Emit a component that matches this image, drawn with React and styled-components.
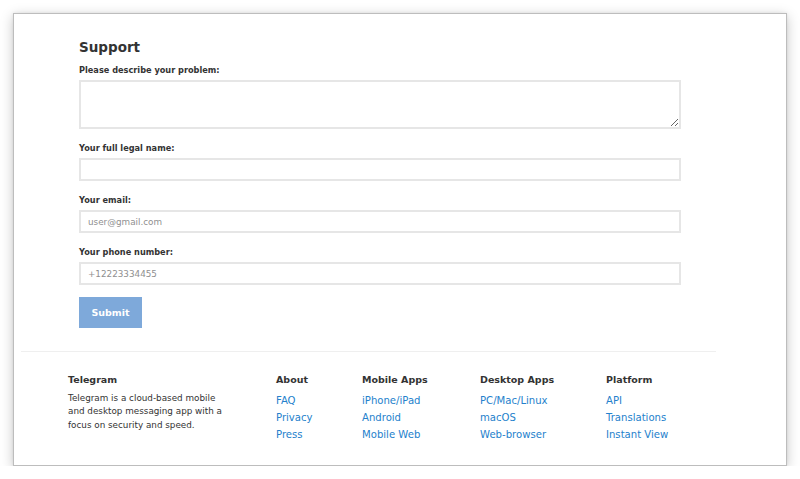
import React from "react";
import styled, { createGlobalStyle } from "styled-components";

const Global = createGlobalStyle`
  html, body { margin: 0; padding: 0; background: #ffffff; }
  body { font-family: "DejaVu Sans", "Lucida Grande", Verdana, sans-serif; color: #333; }
  * { box-sizing: border-box; }
`;

const Window = styled.div`
  margin: 13px 0 0 13px;
  width: 774px;
  height: 453px;
  background: #fff;
  border: 1px solid #bdbdbd;
  box-shadow: 0 3px 12px rgba(0, 0, 0, 0.22), 0 0 3px rgba(0, 0, 0, 0.08);
  overflow: hidden;
`;

const Container = styled.div`
  margin-left: 7px;
  width: 695px;
`;

const FormSection = styled.form`
  padding: 25px 0 0 58px;
  width: 660px;
  display: flex;
  flex-direction: column;
  align-items: flex-start;
`;

const Title = styled.h3`
  margin: 0 0 10px;
  font-size: 13.5px;
  line-height: 16px;
  font-weight: bold;
  color: #333;
`;

const Group = styled.div`
  width: 602px;
  margin-bottom: 14px;
  display: flex;
  flex-direction: column;
  &:last-of-type { margin-bottom: 12px; }
`;

const Label = styled.label`
  display: block;
  font-size: 8.2px;
  line-height: 10px;
  font-weight: bold;
  color: #333;
  margin-bottom: 5px;
`;

const fieldBase = `
  width: 602px;
  border: 2px solid #e6e6e6;
  background: #fff;
  font-family: "DejaVu Sans", Verdana, sans-serif;
  font-size: 8.8px;
  color: #333;
  padding: 0 7px;
  outline: none;
  border-radius: 0;
  &::placeholder { color: #8f8f8f; opacity: 1; }
`;

const TextArea = styled.textarea`
  ${fieldBase}
  height: 49px;
  display: block;
  padding-top: 4px;
`;

const Input = styled.input`
  ${fieldBase}
  height: 23px;
  display: block;
`;

const SubmitButton = styled.button`
  width: 63px;
  height: 31px;
  border: none;
  background: #7ea9da;
  color: #fff;
  font-family: "DejaVu Sans", Verdana, sans-serif;
  font-weight: bold;
  font-size: 9.5px;
  padding: 0;
  cursor: pointer;
`;

const Divider = styled.hr`
  margin: 23px 0 0;
  border: none;
  border-top: 1px solid #efefef;
  height: 0;
`;

const Footer = styled.footer`
  display: grid;
  grid-template-columns: 208px 86px 118px 126px 1fr;
  padding: 22px 0 0 47px;
`;

const Column = styled.div`
  display: flex;
  flex-direction: column;
`;

const FooterHeading = styled.h5`
  margin: 0 0 6px;
  font-size: 9.5px;
  line-height: 12px;
  font-weight: bold;
  color: #333;
`;

const Description = styled.p`
  margin: 0;
  width: 160px;
  font-size: 8.8px;
  line-height: 13.3px;
  color: #333;
`;

const LinkList = styled.ul`
  list-style: none;
  margin: 0;
  padding: 0;
`;

const LinkItem = styled.li`
  font-size: 10.1px;
  line-height: 17px;
  white-space: nowrap;
`;

const FooterLink = styled.a`
  color: #2481cc;
  text-decoration: none;
`;

const columns = [
  { title: "About", links: ["FAQ", "Privacy", "Press"] },
  { title: "Mobile Apps", links: ["iPhone/iPad", "Android", "Mobile Web"] },
  { title: "Desktop Apps", links: ["PC/Mac/Linux", "macOS", "Web-browser"] },
  { title: "Platform", links: ["API", "Translations", "Instant View"] },
];

export default function App() {
  return (
    <>
      <Global />
      <Window>
        <Container>
          <FormSection onSubmit={(e) => e.preventDefault()}>
            <Title>Support</Title>
            <Group>
              <Label htmlFor="problem">Please describe your problem:</Label>
              <TextArea id="problem" />
            </Group>
            <Group>
              <Label htmlFor="name">Your full legal name:</Label>
              <Input id="name" type="text" />
            </Group>
            <Group>
              <Label htmlFor="email">Your email:</Label>
              <Input id="email" type="text" placeholder="user@gmail.com" />
            </Group>
            <Group>
              <Label htmlFor="phone">Your phone number:</Label>
              <Input id="phone" type="text" placeholder="+12223334455" />
            </Group>
            <SubmitButton type="submit">Submit</SubmitButton>
          </FormSection>
          <Divider />
          <Footer>
            <Column>
              <FooterHeading>Telegram</FooterHeading>
              <Description>
                Telegram is a cloud-based mobile and desktop messaging app with a focus on security and speed.
              </Description>
            </Column>
            {columns.map((col) => (
              <Column key={col.title}>
                <FooterHeading>{col.title}</FooterHeading>
                <LinkList>
                  {col.links.map((l) => (
                    <LinkItem key={l}>
                      <FooterLink href="#">{l}</FooterLink>
                    </LinkItem>
                  ))}
                </LinkList>
              </Column>
            ))}
          </Footer>
        </Container>
      </Window>
    </>
  );
}
